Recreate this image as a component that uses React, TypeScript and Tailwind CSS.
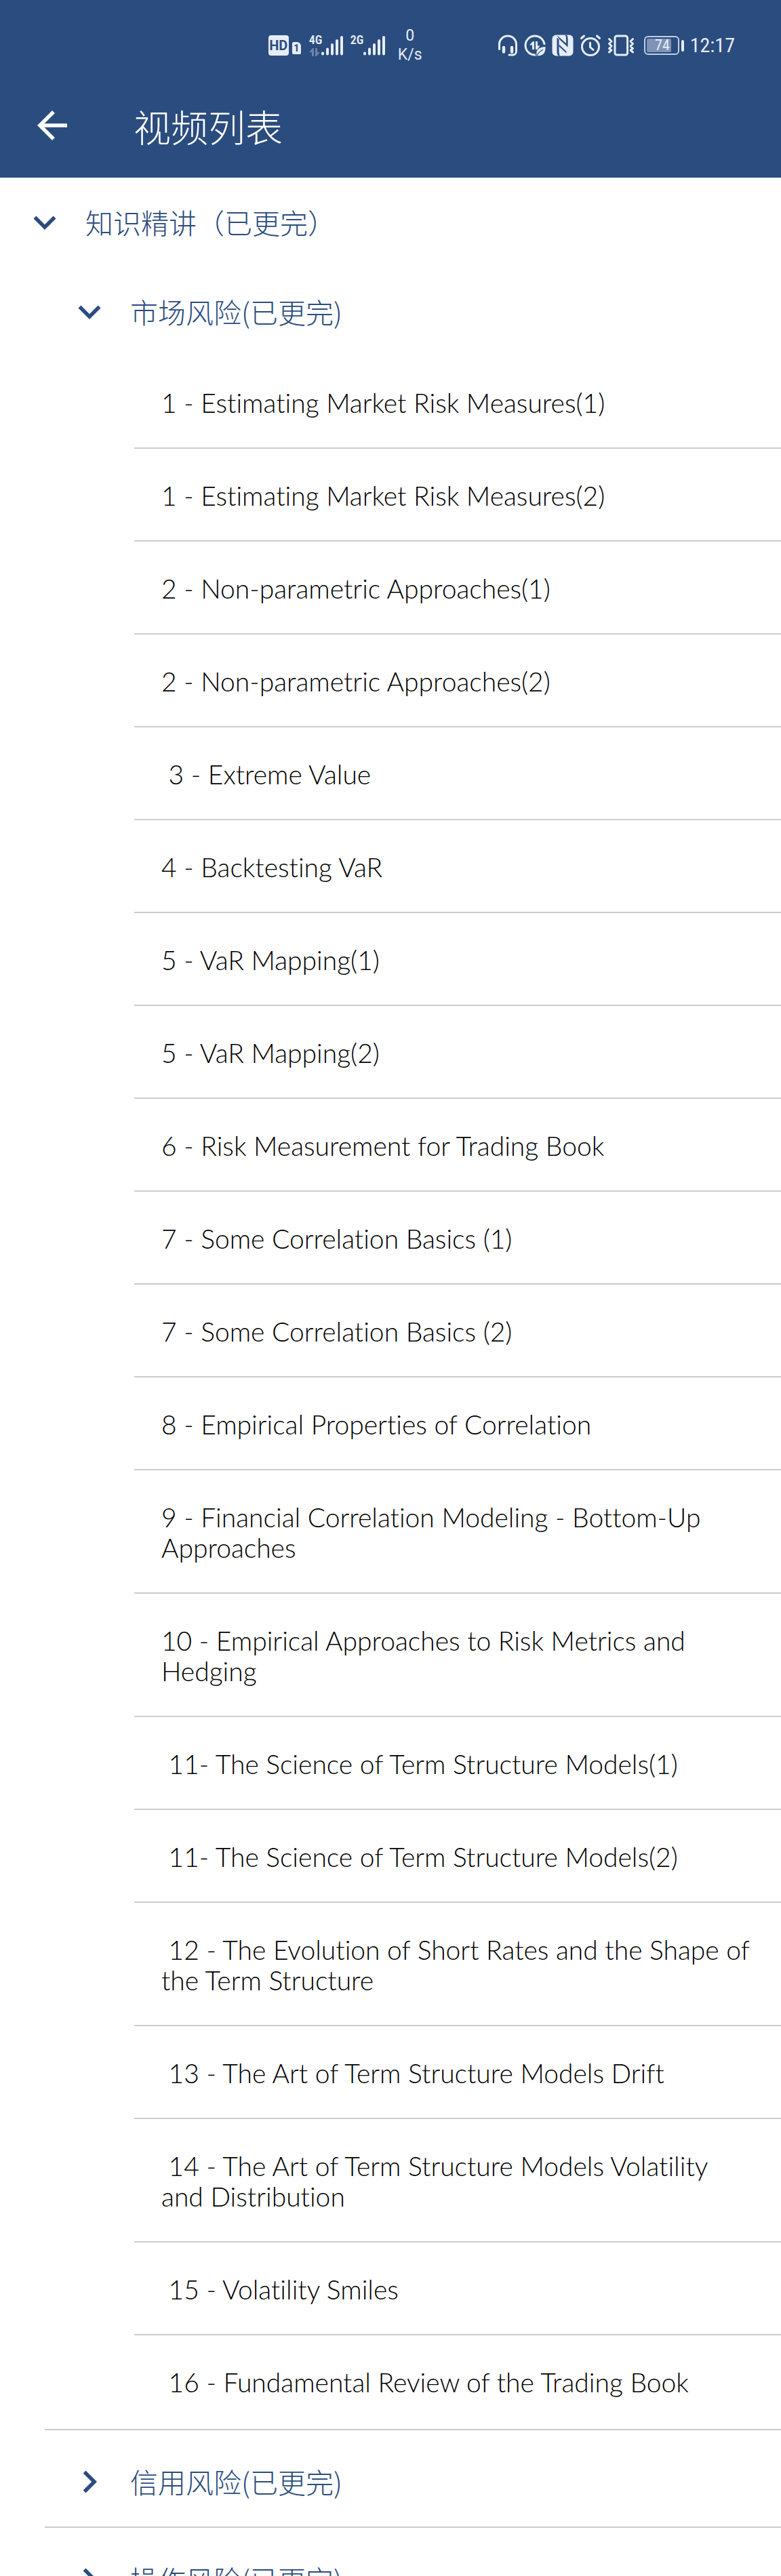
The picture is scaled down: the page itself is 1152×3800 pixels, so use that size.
import React, { useState } from 'react';
import { MdArrowBack, MdChevronRight, MdExpandMore } from 'react-icons/md';

const lessons = [
  '1 - Estimating Market Risk Measures(1)',
  '1 - Estimating Market Risk Measures(2)',
  '2 - Non-parametric Approaches(1)',
  '2 - Non-parametric Approaches(2)',
  ' 3 - Extreme Value',
  '4 - Backtesting VaR',
  '5 - VaR Mapping(1)',
  '5 - VaR Mapping(2)',
  '6 - Risk Measurement for Trading Book',
  '7 - Some Correlation Basics (1)',
  '7 - Some Correlation Basics (2)',
  '8 - Empirical Properties of Correlation',
  '9 - Financial Correlation Modeling - Bottom-Up Approaches',
  '10 - Empirical Approaches to Risk Metrics and Hedging',
  ' 11- The Science of Term Structure Models(1)',
  ' 11- The Science of Term Structure Models(2)',
  ' 12 - The Evolution of Short Rates and the Shape of the Term Structure',
  ' 13 - The Art of Term Structure Models Drift',
  ' 14 - The Art of Term Structure Models Volatility and Distribution',
  ' 15 - Volatility Smiles',
  ' 16 - Fundamental Review of the Trading Book',
];

const collapsedGroups = ['信用风险(已更完)', '操作风险(已更完)'];

function SignalBars() {
  return (
    <svg width="34" height="32" viewBox="0 0 34 32" stroke="currentColor" strokeWidth="4" strokeLinecap="round">
      <path d="M3 27.5v1M10 21.5v7M17 15v13.5M24 9v19.5M31 4v24.5" />
    </svg>
  );
}

function DataArrows() {
  return (
    <svg className="opacity-35" width="16" height="12" viewBox="0 0 16 12" fill="currentColor">
      <path d="M0 6 5 0h2v12H4V6zM9 0h3v6h4l-5 6H9z" />
    </svg>
  );
}

function HeadsetIcon() {
  return (
    <svg width="30" height="32" viewBox="0 0 30 32" fill="none" stroke="currentColor" strokeWidth="3" strokeLinecap="round">
      <path d="M2.5 21.5v-7a12.5 12.5 0 0 1 25 0V25a5 5 0 0 1-5 5H17" />
      <path d="M9 19v6.5M21 19v6.5" strokeWidth="4.5" />
    </svg>
  );
}

function DataSaverIcon() {
  return (
    <svg width="32" height="32" viewBox="0 0 32 32" fill="none">
      <path d="M30 15A14 14 0 1 0 17 30" stroke="currentColor" strokeWidth="3" />
      <path d="M8 15.5 13 10h2v12h-3v-6.5zM17 10h3v6.5h3.5L19.5 22H17z" fill="currentColor" />
      <path d="M31.5 18c-9 .5-14 4-13 11.5L17.5 32l2-1C27 32 32 28 31.5 18z" fill="currentColor" />
      <path d="M19 31c2-4 5-6.5 9-9" stroke="#2b4c7e" strokeWidth="1.2" />
    </svg>
  );
}

function NfcIcon() {
  return (
    <svg width="32" height="32" viewBox="0 0 32 32">
      <rect x="0.5" y="0.5" width="31" height="31" rx="6" fill="currentColor" />
      <path d="M7 .5 21 13V7c0-3.5-.5-5-1.5-6.5H22c1.2 2 1.6 3.5 1.6 6.5v11.500L12 8z" fill="#2b4c7e" />
      <path d="M7.5 4.5 10.5 7v18c0 3 .5 4.800 1.700 6.500H9.500c-1.500-2-2-3.500-2-6.500z" fill="#2b4c7e" />
      <path d="M10.500 14.500 21.500 25v2.500l-11-10z" fill="#2b4c7e" />
    </svg>
  );
}

function AlarmIcon() {
  return (
    <svg width="32" height="32" viewBox="0 0 32 32" fill="none" stroke="currentColor" strokeWidth="3" strokeLinecap="round">
      <circle cx="16" cy="18" r="12.5" />
      <path d="M15.5 12v6.5l4.500 4M2.5 5.500 6.500 2M29.5 5.500 25.500 2" />
    </svg>
  );
}

function VibrateIcon() {
  return (
    <svg width="40" height="32" viewBox="0 0 40 32" fill="none" stroke="currentColor" strokeWidth="3" strokeLinecap="round" strokeLinejoin="round">
      <rect x="11" y="2" width="18.5" height="28" rx="3" />
      <path d="M2.5 6.500 6 10l-3.500 3.500L6 17l-3.500 3.500L6 23l-3.500 3M37.5 6.500 34 10l3.500 3.500L34 17l3.500 3.500L34 23l3.500 3" />
    </svg>
  );
}

function StatusBar() {
  return (
    <div className="flex h-28 items-center justify-end pt-[22px] pr-[68px] font-['Roboto','Liberation_Sans',sans-serif] text-[#e6edf8]">
      <div className="flex items-center">
        <span className="flex size-[30px] items-center justify-center rounded-sm bg-[#e6edf8] text-[20px] leading-none font-bold text-[#2b4c7e]">
          HD
        </span>
        <span className="mt-2 ml-[5px] flex h-[18px] w-[13px] items-center justify-center rounded-xs rounded-tr-md bg-[#e6edf8] text-[15px] leading-none font-bold text-[#2b4c7e]">
          1
        </span>
        <div className="ml-3 flex h-8 w-[17px] flex-col justify-between">
          <span className="text-[18px] leading-4 font-semibold font-['Roboto_Condensed','Roboto',sans-serif]">4G</span>
          <DataArrows />
        </div>
        <SignalBars />
        <div className="ml-[10px] h-8 w-[18px]">
          <span className="block text-[18px] leading-4 font-semibold font-['Roboto_Condensed','Roboto',sans-serif]">2G</span>
        </div>
        <SignalBars />
        <div className="ml-4 flex w-10 flex-col text-center text-[23px] leading-7">
          <span>0</span>
          <span>K/s</span>
        </div>
      </div>
      <div className="ml-[109px] flex items-center gap-[9px]">
        <HeadsetIcon />
        <DataSaverIcon />
        <NfcIcon />
        <AlarmIcon />
        <VibrateIcon />
        <div className="ml-[5px] flex items-center gap-[3px]">
          <div className="flex h-7 w-[52px] rounded-md border-2 border-[#c3cfe2] p-[2px]">
            <div className="flex w-9 items-center justify-end rounded-xs bg-[#7e93b5] pr-[2px] text-[22px] leading-none font-['Roboto_Condensed','Roboto',sans-serif]">
              74
            </div>
          </div>
          <div className="h-[17px] w-1 rounded-full bg-[#e6edf8]" />
        </div>
        <span className="text-[30px] leading-none font-['Roboto_Condensed','Roboto',sans-serif]">12:17</span>
      </div>
    </div>
  );
}

export default function App() {
  const [rootOpen, setRootOpen] = useState(true);
  const [marketOpen, setMarketOpen] = useState(true);

  return (
    <div className="flex h-screen flex-col overflow-hidden bg-white font-['Noto_Sans_CJK_SC',sans-serif]">
      <header className="shrink-0 bg-[#2b4c7e] text-white">
        <StatusBar />
        <div className="flex h-[150px] items-center pb-1 pl-11">
          <button type="button" aria-label="返回">
            <MdArrowBack className="size-[66px]" />
          </button>
          <h1 className="ml-[87px] text-[55px] leading-none font-light">视频列表</h1>
        </div>
      </header>

      <main>
        <button
          type="button"
          onClick={() => setRootOpen(!rootOpen)}
          className="flex h-[132px] w-full items-center gap-[27px] pl-[33px] text-left text-[41px] font-light text-[#2b4c7e]"
        >
          {rootOpen ? <MdExpandMore className="size-[66px]" /> : <MdChevronRight className="size-[66px]" />}
          知识精讲（已更完）
        </button>

        {rootOpen && (
          <div className="pl-[66px]">
            <button
              type="button"
              onClick={() => setMarketOpen(!marketOpen)}
              className="flex h-[131px] w-full items-center gap-[27px] pl-[33px] text-left text-[41px] font-light text-[#2b4c7e]"
            >
              {marketOpen ? <MdExpandMore className="size-[66px]" /> : <MdChevronRight className="size-[66px]" />}
              市场风险(已更完)
            </button>

            {marketOpen && (
              <ul className="pb-[3px] pl-[132px] font-['Lato','Noto_Sans_CJK_SC',sans-serif] text-[39px] leading-[45px] font-light text-black [font-variant-ligatures:none]">
                {lessons.map((lesson) => (
                  <li key={lesson} className="border-b-2 border-[#cccccc] last:border-b-0">
                    <a href="#" className="block pt-[47px] pr-10 pb-[43px] pl-10 whitespace-pre-wrap">
                      {lesson}
                    </a>
                  </li>
                ))}
              </ul>
            )}

            {collapsedGroups.map((group) => (
              <button
                key={group}
                type="button"
                className="flex h-36 w-full items-center gap-[27px] border-t-2 border-[#cccccc] pt-[10px] pl-[33px] text-left text-[41px] font-light text-[#2b4c7e]"
              >
                <MdChevronRight className="size-[66px]" />
                {group}
              </button>
            ))}
          </div>
        )}
      </main>
    </div>
  );
}
